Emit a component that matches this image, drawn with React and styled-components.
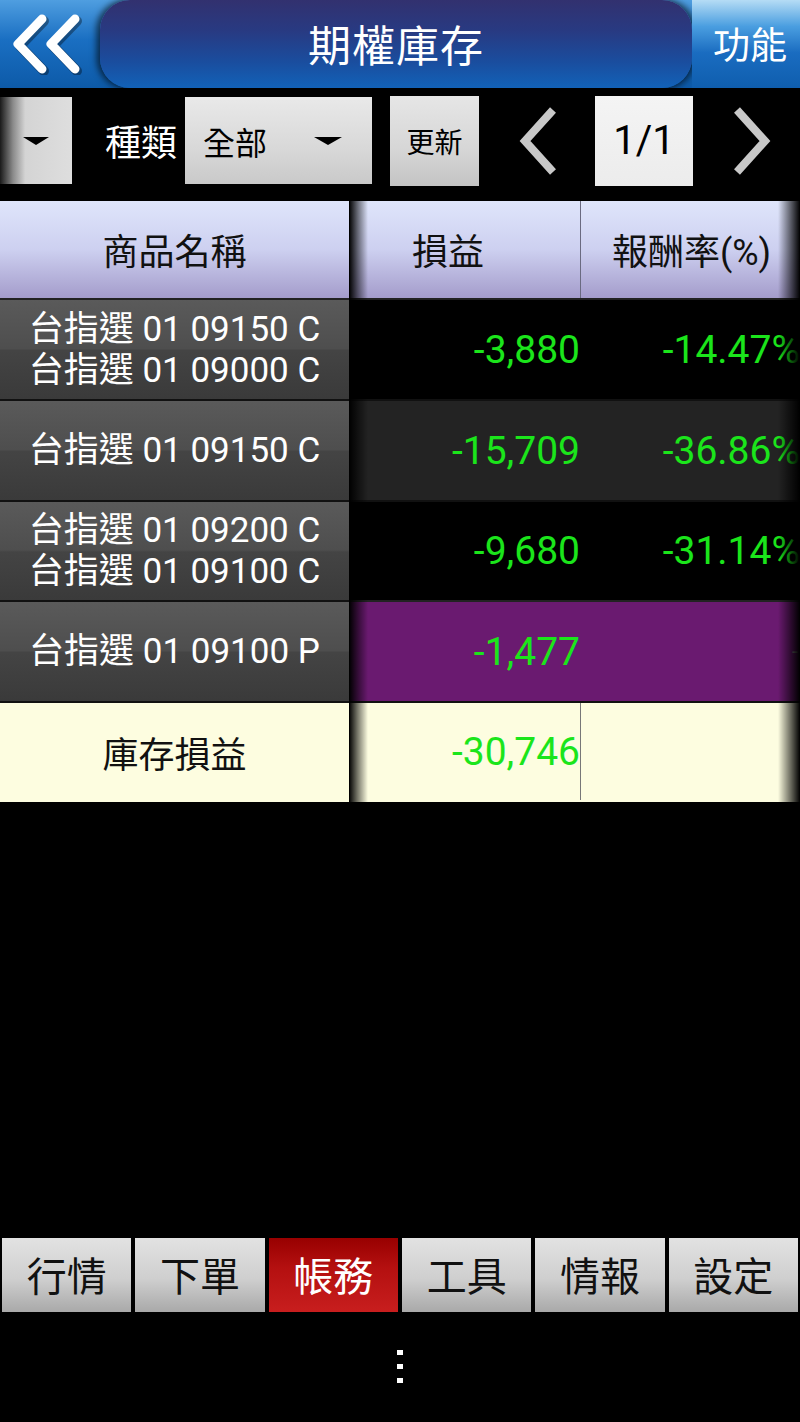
import React from 'react'
import styled, { createGlobalStyle } from 'styled-components'

const Global = createGlobalStyle`
  html, body {
    margin: 0;
    padding: 0;
    background: #000;
  }
  body {
    font-family: Roboto, "Noto Sans CJK TC", "Noto Sans", sans-serif;
  }
`

const Screen = styled.div`
  width: 800px;
  height: 1422px;
  background: #000;
  display: flex;
  flex-direction: column;
  overflow: hidden;
`

/* ---------- header ---------- */
const Header = styled.header`
  height: 88px;
  display: flex;
  background: linear-gradient(180deg, #4f9ee0 0%, #1a6fc2 45%, #0d5aa8 100%);
  border-bottom: 2px solid #000;
`
const BackButton = styled.div`
  width: 100px;
  display: flex;
  align-items: center;
  justify-content: center;
  padding-right: 8px;
  box-sizing: border-box;
`
const TitlePill = styled.div`
  flex: 1;
  display: flex;
  align-items: center;
  justify-content: center;
  border-radius: 30px;
  background: linear-gradient(180deg, #32316f 0%, #283a82 35%, #1a4d9e 70%, #1262b8 100%);
  box-shadow: -4px 0 6px rgba(0, 0, 0, 0.55), 4px 0 6px rgba(0, 0, 0, 0.55);
  color: #fff;
  font-size: 43px;
  letter-spacing: 1px;
  padding-bottom: 2px;
`
const FuncButton = styled.div`
  width: 100px;
  display: flex;
  align-items: center;
  justify-content: center;
  color: #fff;
  font-size: 37px;
  padding-left: 8px;
  padding-bottom: 2px;
  background: linear-gradient(180deg, #b5dcf5 0%, #4a9ee0 30%, #1a6cc0 60%, #0f5eae 100%);
`

/* ---------- toolbar ---------- */
const Toolbar = styled.div`
  height: 109px;
  display: flex;
  align-items: center;
`
const Stub = styled.div`
  width: 72px;
  height: 87px;
  margin-bottom: 8px;
  display: flex;
  align-items: center;
  justify-content: center;
  background: linear-gradient(90deg, #1a1a1a 0%, #8a8a8a 18%, #d4d4d4 35%, #dedede 100%);
`
const Arrow = styled.span`
  width: 0;
  height: 0;
  border-left: ${p => p.$size}px solid transparent;
  border-right: ${p => p.$size}px solid transparent;
  border-top: ${p => p.$size * 0.62}px solid #000;
`
const Label = styled.span`
  color: #fff;
  font-size: 36px;
  margin-left: 33px;
  margin-right: 8px;
  margin-bottom: 10px;
`
const Select = styled.div`
  width: 187px;
  height: 87px;
  margin-bottom: 8px;
  display: flex;
  align-items: center;
  justify-content: space-between;
  padding: 0 30px 0 18px;
  box-sizing: border-box;
  background: linear-gradient(180deg, #e9e9e9 0%, #d8d8d8 60%, #c9c9c9 100%);
  font-size: 32px;
  color: #000;
`
const Button = styled.div`
  width: 89px;
  height: 90px;
  margin-left: 18px;
  margin-bottom: 8px;
  display: flex;
  align-items: center;
  justify-content: center;
  background: linear-gradient(180deg, #e6e6e6 0%, #d6d6d6 60%, #c4c4c4 100%);
  font-size: 28px;
  color: #000;
`
const Chevron = styled.svg`
  width: 40px;
  height: 70px;
  margin: ${p => p.$margin};
  margin-bottom: 8px;
`
const PageBox = styled.div`
  width: 98px;
  height: 90px;
  margin-bottom: 8px;
  display: flex;
  align-items: center;
  justify-content: center;
  background: linear-gradient(180deg, #f4f4f4 0%, #ececec 100%);
  font-size: 40px;
  color: #000;
`

/* ---------- table ---------- */
const Table = styled.div`
  display: flex;
  margin-top: 2px;
`
const NameCol = styled.div`
  width: 349px;
  display: flex;
  flex-direction: column;
  border-right: 1px solid #000;
`
const ScrollArea = styled.div`
  position: relative;
  width: 450px;
  overflow: hidden;
`
const ScrollInner = styled.div`
  width: 480px;
  display: flex;
  flex-direction: column;
`
const HeadCell = styled.div`
  height: 99px;
  display: flex;
  align-items: center;
  justify-content: center;
  font-size: 36px;
  color: #111;
  background: linear-gradient(180deg, #dfe5fb 0%, #cdd0f0 50%, #a49ccb 100%);
  border-bottom: 2px solid #222;
  padding-bottom: 2px;
  box-sizing: border-box;
`
const HeadRow = styled.div`
  height: 99px;
  display: grid;
  grid-template-columns: 230px 250px;
  border-bottom: 2px solid #222;
  box-sizing: border-box;
  background: linear-gradient(180deg, #dfe5fb 0%, #cdd0f0 50%, #a49ccb 100%);
  & > div {
    display: flex;
    align-items: center;
    justify-content: center;
    font-size: 36px;
    color: #111;
    padding-bottom: 2px;
  }
  & > div:first-child {
    padding-right: 34px;
  }
  & > div + div {
    border-left: 1px solid #6a6a80;
    padding-right: 28px;
  }
`
const NameCell = styled.div`
  height: ${p => p.$h}px;
  display: flex;
  flex-direction: column;
  align-items: center;
  justify-content: center;
  color: #fff;
  font-size: 35px;
  line-height: 41px;
  background: linear-gradient(180deg, #5a5a5a 0%, #4e4e4e 49%, #444 51%, #3a3a3a 100%);
  border-bottom: 2px solid #111;
  box-sizing: border-box;
`
const TotalName = styled.div`
  height: 99px;
  display: flex;
  align-items: center;
  justify-content: center;
  font-size: 36px;
  color: #111;
  background: #fdfde0;
  padding-bottom: 2px;
  box-sizing: border-box;
`
const DataRow = styled.div`
  height: ${p => p.$h}px;
  display: grid;
  grid-template-columns: 230px 250px;
  background: ${p => p.$bg};
  border-bottom: 2px solid ${p => p.$line};
  box-sizing: border-box;
`
const Num = styled.div`
  display: flex;
  align-items: center;
  justify-content: flex-end;
  color: #1be51b;
  font-size: 39px;
  padding-right: ${p => p.$pr || 0}px;
  border-left: ${p => (p.$divider ? '1px solid #777' : 'none')};
  white-space: nowrap;
`
const Dash = styled.span`
  color: #888;
  font-size: 22px;
  margin-right: 2px;
`
const ShadeLeft = styled.div`
  position: absolute;
  top: 0;
  bottom: 0;
  left: 0;
  width: 18px;
  background: linear-gradient(90deg, rgba(0, 0, 0, 0.95) 0%, rgba(0, 0, 0, 0.5) 45%, rgba(0, 0, 0, 0) 100%);
`
const ShadeRight = styled.div`
  position: absolute;
  top: 0;
  bottom: 0;
  right: 0;
  width: 22px;
  background: linear-gradient(270deg, rgba(0, 0, 0, 1) 0%, rgba(0, 0, 0, 0.6) 40%, rgba(0, 0, 0, 0) 100%);
`

/* ---------- bottom tabs ---------- */
const Spacer = styled.div`
  flex: 1;
`
const TabBar = styled.nav`
  display: flex;
  gap: 4px;
  padding: 0 2px;
  height: 74px;
`
const Tab = styled.div`
  flex: 1;
  display: flex;
  align-items: center;
  justify-content: center;
  font-size: 40px;
  padding-bottom: 2px;
  color: ${p => (p.$active ? '#fff' : '#111')};
  background: ${p =>
    p.$active
      ? 'linear-gradient(180deg, #980000 0%, #b41010 40%, #c81e1e 100%)'
      : 'linear-gradient(180deg, #e2e2e2 0%, #cfcfcf 55%, #a9a9a9 100%)'};
`
const NavBar = styled.div`
  height: 108px;
  display: flex;
  align-items: center;
  justify-content: center;
  padding-bottom: 2px;
`
const Dots = styled.div`
  display: flex;
  flex-direction: column;
  gap: 9px;
  & > span {
    width: 6px;
    height: 5px;
    background: #fff;
  }
`

const rows = [
  { names: ['台指選 01 09150 C', '台指選 01 09000 C'], pl: '-3,880', rate: '-14.47%', bg: '#000' },
  { names: ['台指選 01 09150 C'], pl: '-15,709', rate: '-36.86%', bg: '#232323' },
  { names: ['台指選 01 09200 C', '台指選 01 09100 C'], pl: '-9,680', rate: '-31.14%', bg: '#000' },
  { names: ['台指選 01 09100 P'], pl: '-1,477', rate: null, bg: '#6a1a70' },
]

const tabs = ['行情', '下單', '帳務', '工具', '情報', '設定']

const BackIcon = () => (
  <svg width="78" height="62" viewBox="0 0 78 62">
    <g fill="none" stroke="rgba(0,0,0,0.35)" strokeWidth="10" strokeLinecap="round" strokeLinejoin="round">
      <polyline points="37,8 13,33 37,58" />
      <polyline points="70,8 46,33 70,58" />
    </g>
    <g fill="none" stroke="#fff" strokeWidth="9" strokeLinecap="round" strokeLinejoin="round">
      <polyline points="35,6 11,31 35,56" />
      <polyline points="68,6 44,31 68,56" />
    </g>
  </svg>
)

export default function App() {
  return (
    <Screen>
      <Global />
      <Header>
        <BackButton>
          <BackIcon />
        </BackButton>
        <TitlePill>期權庫存</TitlePill>
        <FuncButton>功能</FuncButton>
      </Header>

      <Toolbar>
        <Stub>
          <Arrow $size={13} />
        </Stub>
        <Label>種類</Label>
        <Select>
          <span>全部</span>
          <Arrow $size={14} />
        </Select>
        <Button>更新</Button>
        <Chevron viewBox="0 0 40 70" $margin="0 36px 0 40px">
          <polyline points="34,4 6,35 34,66" fill="none" stroke="#c8c8c8" strokeWidth="8" strokeLinejoin="miter" />
        </Chevron>
        <PageBox>1/1</PageBox>
        <Chevron viewBox="0 0 40 70" $margin="0 0 0 38px">
          <polyline points="6,4 34,35 6,66" fill="none" stroke="#c8c8c8" strokeWidth="8" strokeLinejoin="miter" />
        </Chevron>
      </Toolbar>

      <Table>
        <NameCol>
          <HeadCell>商品名稱</HeadCell>
          {rows.map((r, i) => (
            <NameCell key={i} $h={i === 2 ? 100 : 101}>
              {r.names.map(n => (
                <span key={n}>{n}</span>
              ))}
            </NameCell>
          ))}
          <TotalName>庫存損益</TotalName>
        </NameCol>
        <ScrollArea>
          <ScrollInner>
            <HeadRow>
              <div>損益</div>
              <div>報酬率(%)</div>
            </HeadRow>
            {rows.map((r, i) => (
              <DataRow key={i} $h={i === 2 ? 100 : 101} $bg={r.bg} $line={i === 2 ? '#222' : '#111'}>
                <Num>{r.pl}</Num>
                <Num $pr={30}>{r.rate ? r.rate : <Dash>-</Dash>}</Num>
              </DataRow>
            ))}
            <DataRow $h={99} $bg="#fdfde0" $line="#fdfde0">
              <Num>-30,746</Num>
              <Num $divider />
            </DataRow>
          </ScrollInner>
          <ShadeLeft />
          <ShadeRight />
        </ScrollArea>
      </Table>

      <Spacer />
      <TabBar>
        {tabs.map(t => (
          <Tab key={t} $active={t === '帳務'}>
            {t}
          </Tab>
        ))}
      </TabBar>
      <NavBar>
        <Dots>
          <span />
          <span />
          <span />
        </Dots>
      </NavBar>
    </Screen>
  )
}
